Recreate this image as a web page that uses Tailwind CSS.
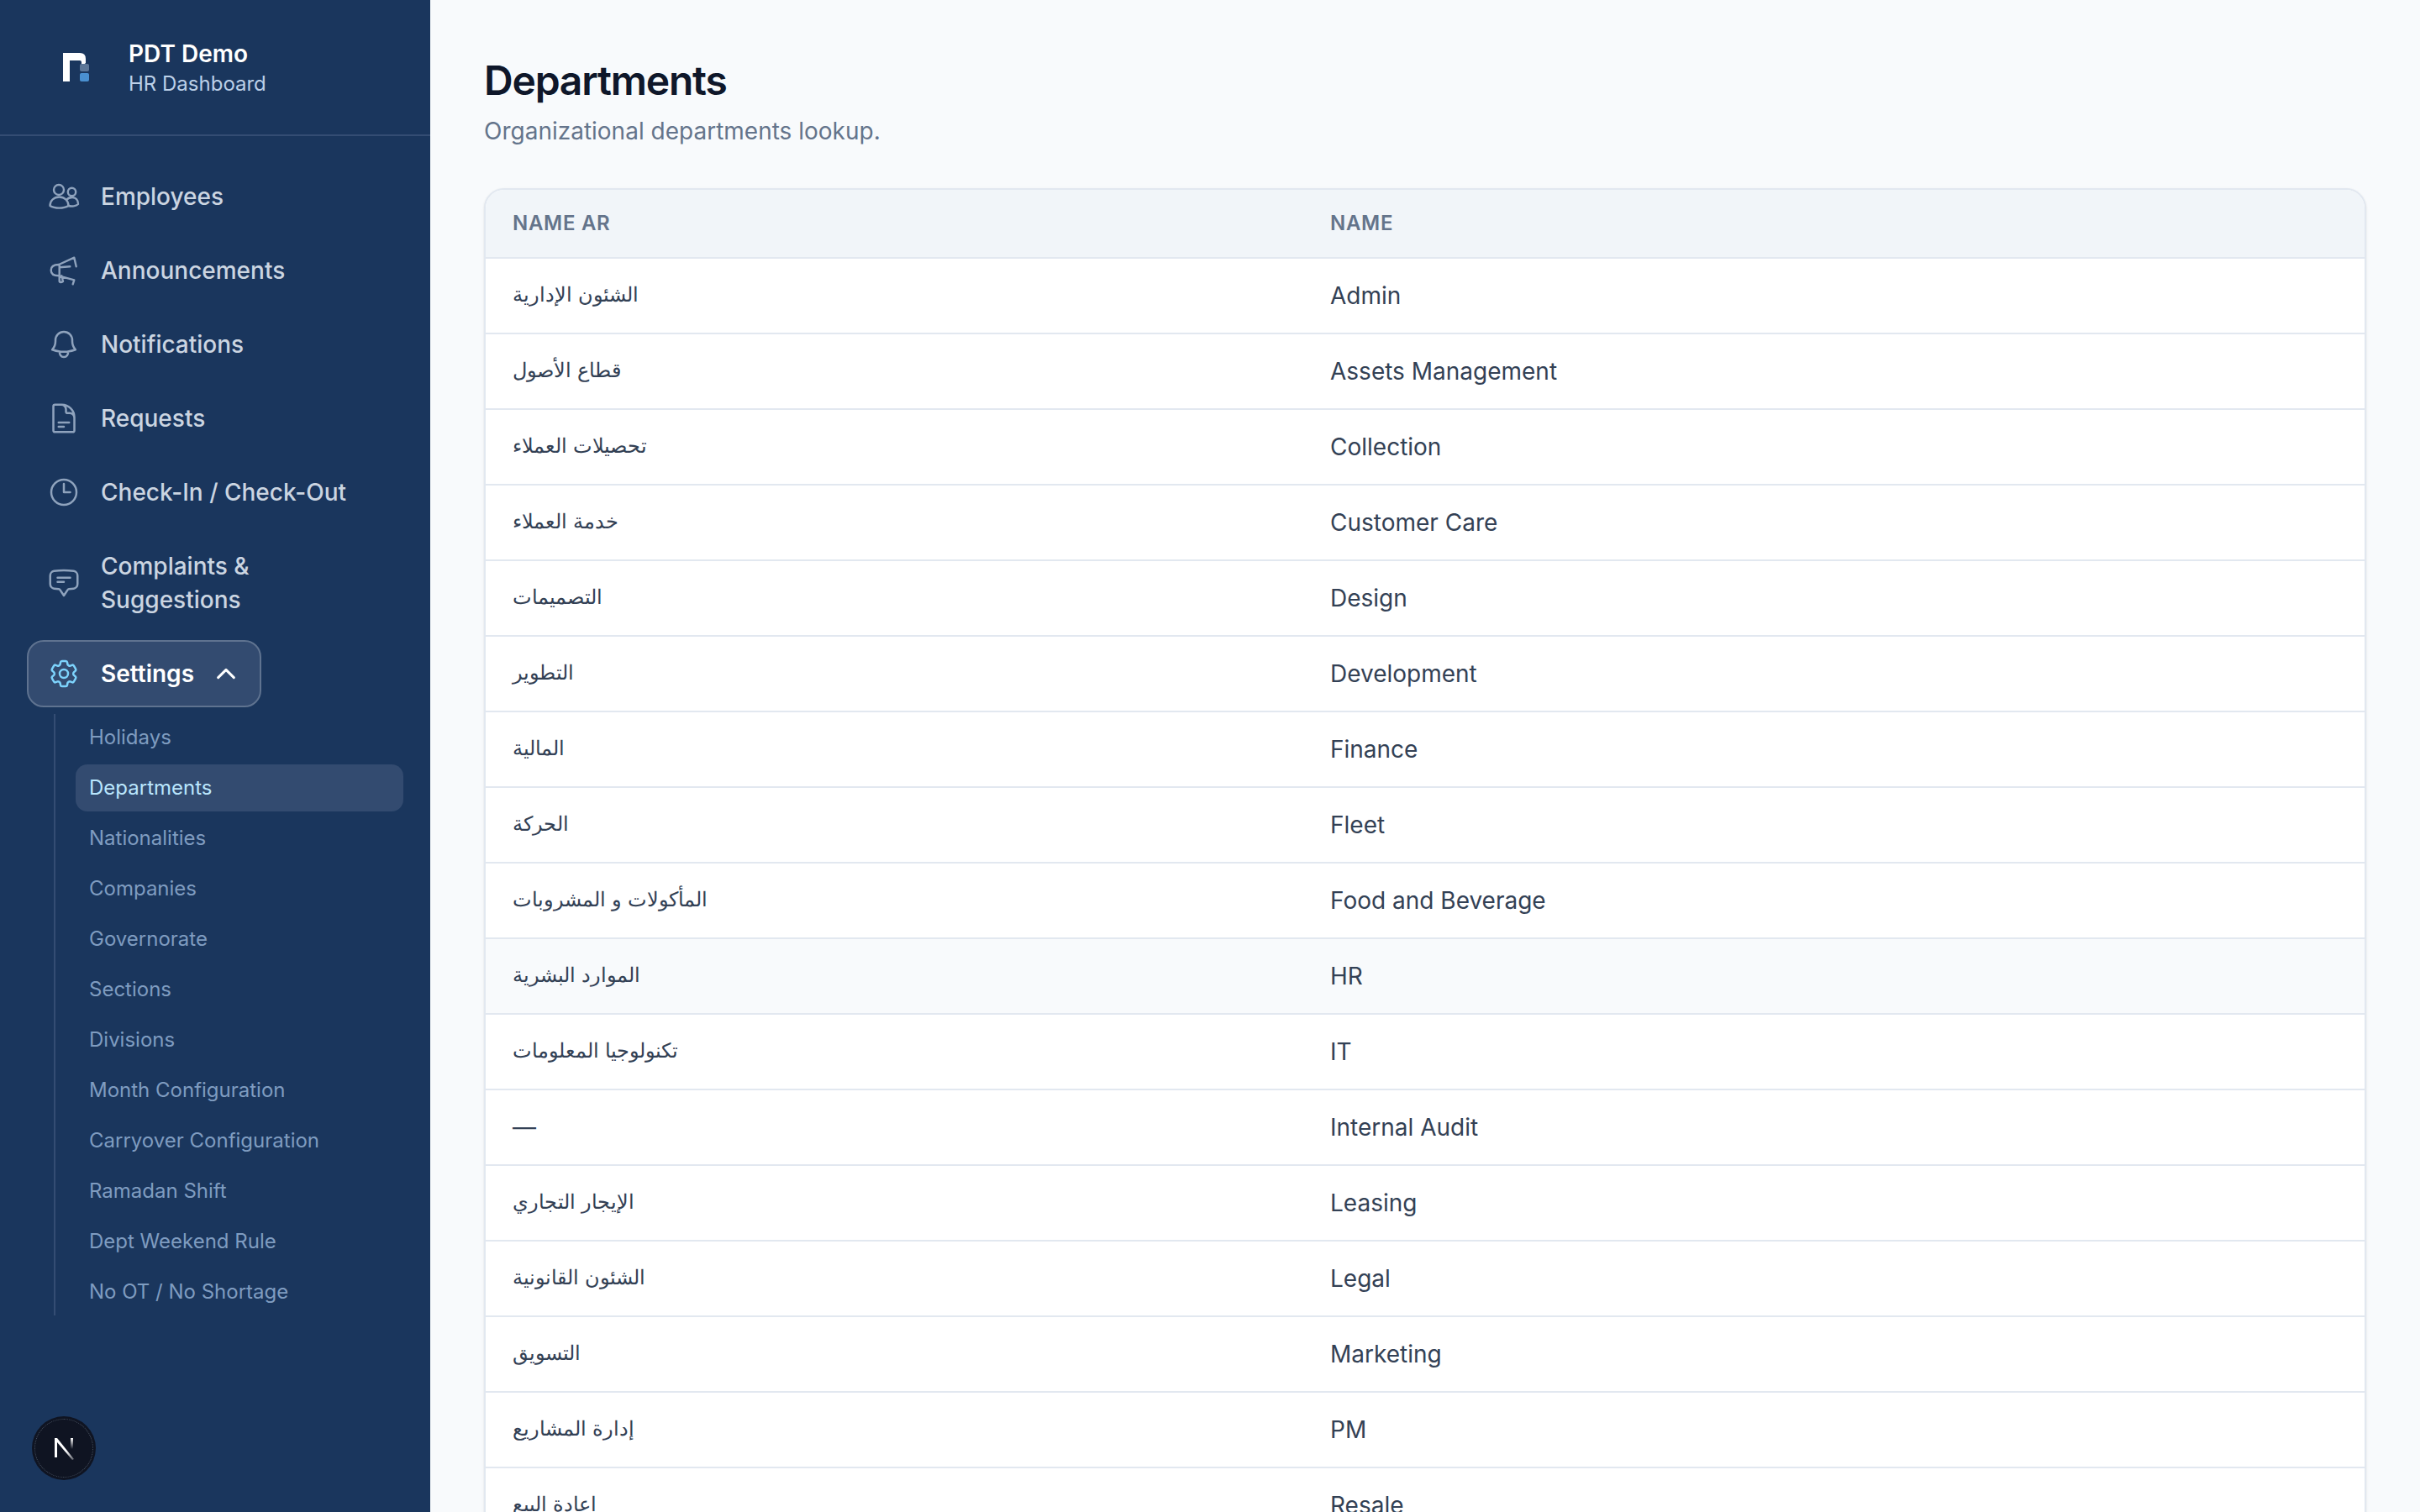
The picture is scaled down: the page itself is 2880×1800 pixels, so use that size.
<!DOCTYPE html>
<html lang="en">
<head>
    <meta charset="UTF-8">
    <title>Departments - PDT Demo</title>
    <script src="https://cdn.jsdelivr.net/npm/@tailwindcss/browser@4"></script>
</head>
<body class="h-screen overflow-hidden flex bg-[#f8fafc] font-['Inter','Liberation_Sans',sans-serif]">
    <aside class="relative w-[512px] h-full shrink-0 bg-[#1a365d] flex flex-col">
        <div class="h-[162px] shrink-0 border-b-2 border-[#344d73] flex items-center pl-[72px] gap-[45px]">
            <svg width="36" height="40" viewBox="0 0 36 40">
                <path d="M3 3H23Q30 3 30 10V15L25 19V14Q25 12 23 12H11V37H3Z" fill="#fff"/>
                <rect x="23" y="16" width="11" height="9" rx="2" fill="#5d7798"/>
                <rect x="23" y="27" width="11" height="10" rx="2" fill="#4a90d0"/>
            </svg>
            <div class="pt-[2px]">
                <p class="text-[28px] leading-[38px] font-semibold text-white">PDT Demo</p>
                <p class="text-[24px] leading-[34px] text-[#bcd0e8]">HR Dashboard</p>
            </div>
        </div>

        <nav class="px-[32px] pt-[32px] flex flex-col gap-[8px]">
            <a href="#" class="flex items-center gap-[24px] px-[24px] py-[20px] text-[28px] leading-[40px] font-medium text-[#cbd5e1]">
                <svg class="w-[40px] h-[40px] shrink-0" viewBox="-2 -2 40 40" fill="none" stroke="#8fa3bd" stroke-width="2.4" stroke-linecap="round" stroke-linejoin="round">
                    <circle cx="12" cy="10" r="6"/>
                    <circle cx="27.5" cy="12.5" r="4.7"/>
                    <path d="M1.5 29C1.5 23 6 18.5 12.5 18.5S23.5 23 23.5 29C18 32.5 7 32.5 1.5 29Z"/>
                    <path d="M21 22C23 19.5 26 19 28 19C32 19 35 22 35 27C32.5 29.5 27 30 23.5 29"/>
                </svg>
                Employees
            </a>
            <a href="#" class="flex items-center gap-[24px] px-[24px] py-[20px] text-[28px] leading-[40px] font-medium text-[#cbd5e1]">
                <svg class="w-[40px] h-[40px] shrink-0" viewBox="-2 -2 40 40" fill="none" stroke="#8fa3bd" stroke-width="2.4" stroke-linecap="round" stroke-linejoin="round">
                    <path d="M30.3 2.7L32.7 13.3M30.3 2.7L12 11C5 11 2.7 14 2.7 17.7C2.7 22 6 24.3 12 24.3L30.3 29.3L28.7 34.3M12.7 11V31Q14 33 17 31L15.3 24.3M12.7 14.3L25.3 13.3"/>
                </svg>
                Announcements
            </a>
            <a href="#" class="flex items-center gap-[24px] px-[24px] py-[20px] text-[28px] leading-[40px] font-medium text-[#cbd5e1]">
                <svg class="w-[40px] h-[40px] shrink-0" viewBox="0 0 24 24" fill="none" stroke="#8fa3bd" stroke-width="1.5" stroke-linecap="round" stroke-linejoin="round">
                    <path d="M14.857 17.082a23.848 23.848 0 0 0 5.454-1.31A8.967 8.967 0 0 1 18 9.75V9A6 6 0 0 0 6 9v.75a8.967 8.967 0 0 1-2.312 6.022c1.733.64 3.56 1.085 5.455 1.31m5.714 0a24.255 24.255 0 0 1-5.714 0m5.714 0a3 3 0 1 1-5.714 0"/>
                </svg>
                Notifications
            </a>
            <a href="#" class="flex items-center gap-[24px] px-[24px] py-[20px] text-[28px] leading-[40px] font-medium text-[#cbd5e1]">
                <svg class="w-[40px] h-[40px] shrink-0" viewBox="0 0 24 24" fill="none" stroke="#8fa3bd" stroke-width="1.5" stroke-linecap="round" stroke-linejoin="round">
                    <path d="M19.5 14.25v-2.625a3.375 3.375 0 0 0-3.375-3.375h-1.5A1.125 1.125 0 0 1 13.5 7.125v-1.5a3.375 3.375 0 0 0-3.375-3.375H8.25m0 12.75h7.5m-7.5 3H12M10.5 2.25H5.625c-.621 0-1.125.504-1.125 1.125v17.25c0 .621.504 1.125 1.125 1.125h12.75c.621 0 1.125-.504 1.125-1.125V11.25a9 9 0 0 0-9-9Z"/>
                </svg>
                Requests
            </a>
            <a href="#" class="flex items-center gap-[24px] px-[24px] py-[20px] text-[28px] leading-[40px] font-medium text-[#cbd5e1]">
                <svg class="w-[40px] h-[40px] shrink-0" viewBox="0 0 24 24" fill="none" stroke="#8fa3bd" stroke-width="1.5" stroke-linecap="round" stroke-linejoin="round">
                    <path d="M12 6v6h4.5m4.5 0a9 9 0 1 1-18 0 9 9 0 0 1 18 0Z"/>
                </svg>
                Check-In / Check-Out
            </a>
            <a href="#" class="flex items-center gap-[24px] px-[24px] py-[20px] text-[28px] leading-[40px] font-medium text-[#cbd5e1]">
                <svg class="w-[40px] h-[40px] shrink-0" viewBox="0 0 24 24" fill="none" stroke="#8fa3bd" stroke-width="1.5" stroke-linecap="round" stroke-linejoin="round">
                    <path d="M7.5 8.25h9m-9 3H12m-9.75 1.51c0 1.6 1.123 2.994 2.707 3.227 1.129.166 2.27.293 3.423.379.35.026.67.21.865.501L12 21l2.755-4.133a1.14 1.14 0 0 1 .865-.501 48.172 48.172 0 0 0 3.423-.379c1.584-.233 2.707-1.626 2.707-3.228V6.741c0-1.602-1.123-2.995-2.707-3.228A48.394 48.394 0 0 0 12 3c-2.392 0-4.744.175-7.043.513C3.373 3.746 2.25 5.14 2.25 6.741v6.018Z"/>
                </svg>
                <span class="w-[200px]">Complaints &amp; Suggestions</span>
            </a>

            <div>
                <button class="h-[80px] flex items-center gap-[24px] pl-[22px] pr-[26px] rounded-[20px] border-2 border-[#5f7390] bg-[#334b70] text-[28px] font-semibold text-white">
                    <svg class="w-[40px] h-[40px] shrink-0" viewBox="0 0 24 24" fill="none" stroke="#7dd3fc" stroke-width="1.5" stroke-linecap="round" stroke-linejoin="round">
                        <path d="M9.594 3.94c.09-.542.56-.94 1.11-.94h2.593c.55 0 1.02.398 1.11.94l.213 1.281c.063.374.313.686.645.87.074.04.147.083.22.127.325.196.72.257 1.075.124l1.217-.456a1.125 1.125 0 0 1 1.37.49l1.296 2.247a1.125 1.125 0 0 1-.26 1.431l-1.003.827c-.293.241-.438.613-.43.992a7.723 7.723 0 0 1 0 .255c-.008.378.137.75.43.991l1.004.827c.424.35.534.955.26 1.43l-1.298 2.247a1.125 1.125 0 0 1-1.369.491l-1.217-.456c-.355-.133-.75-.072-1.076.124a6.47 6.47 0 0 1-.22.128c-.331.183-.581.495-.644.869l-.213 1.281c-.09.543-.56.94-1.11.94h-2.594c-.55 0-1.019-.398-1.11-.94l-.213-1.281c-.062-.374-.312-.686-.644-.87a6.52 6.52 0 0 1-.22-.127c-.325-.196-.72-.257-1.076-.124l-1.217.456a1.125 1.125 0 0 1-1.369-.49l-1.297-2.247a1.125 1.125 0 0 1 .26-1.431l1.004-.827c.292-.24.437-.613.43-.991a6.932 6.932 0 0 1 0-.255c.007-.38-.138-.751-.43-.992l-1.004-.827a1.125 1.125 0 0 1-.26-1.43l1.297-2.247a1.125 1.125 0 0 1 1.37-.491l1.216.456c.356.133.751.072 1.076-.124.072-.044.146-.086.22-.128.332-.183.582-.495.644-.869l.214-1.28Z"/>
                        <path d="M15 12a3 3 0 1 1-6 0 3 3 0 0 1 6 0Z"/>
                    </svg>
                    Settings
                    <svg class="w-[28px] h-[28px] shrink-0" viewBox="0 0 24 24" fill="none" stroke="#fff" stroke-width="2.6" stroke-linecap="round" stroke-linejoin="round">
                        <path d="M4 16l8-8 8 8"/>
                    </svg>
                </button>

                <div class="mt-[8px] ml-[32px] border-l-2 border-[#344d73] pl-[24px] flex flex-col gap-[4px] text-[24px] text-[#7f9cc0]">
                    <a href="#" class="h-[56px] flex items-center px-[16px] rounded-[14px]">Holidays</a>
                    <a href="#" class="h-[56px] flex items-center px-[16px] rounded-[14px] bg-[#334b70] text-[#bae6fd]">Departments</a>
                    <a href="#" class="h-[56px] flex items-center px-[16px] rounded-[14px]">Nationalities</a>
                    <a href="#" class="h-[56px] flex items-center px-[16px] rounded-[14px]">Companies</a>
                    <a href="#" class="h-[56px] flex items-center px-[16px] rounded-[14px]">Governorate</a>
                    <a href="#" class="h-[56px] flex items-center px-[16px] rounded-[14px]">Sections</a>
                    <a href="#" class="h-[56px] flex items-center px-[16px] rounded-[14px]">Divisions</a>
                    <a href="#" class="h-[56px] flex items-center px-[16px] rounded-[14px]">Month Configuration</a>
                    <a href="#" class="h-[56px] flex items-center px-[16px] rounded-[14px]">Carryover Configuration</a>
                    <a href="#" class="h-[56px] flex items-center px-[16px] rounded-[14px]">Ramadan Shift</a>
                    <a href="#" class="h-[56px] flex items-center px-[16px] rounded-[14px]">Dept Weekend Rule</a>
                    <a href="#" class="h-[56px] flex items-center px-[16px] rounded-[14px]">No OT / No Shortage</a>
                </div>
            </div>
        </nav>

        <!-- dev indicator -->
        <div class="absolute left-[38px] bottom-[38px] w-[76px] h-[76px] rounded-full bg-[#0f1422] flex items-center justify-center">
            <div class="absolute inset-[3px] rounded-full border border-dotted border-[#4b5563]"></div>
            <svg width="30" height="30" viewBox="0 0 30 30" fill="none">
                <defs>
                    <linearGradient id="nDiag" x1="0" y1="0" x2="1" y2="1">
                        <stop offset="0.6" stop-color="#fff"/>
                        <stop offset="1" stop-color="#fff" stop-opacity="0.3"/>
                    </linearGradient>
                    <linearGradient id="nRight" x1="0" y1="0" x2="0" y2="1">
                        <stop offset="0" stop-color="#fff"/>
                        <stop offset="1" stop-color="#fff" stop-opacity="0"/>
                    </linearGradient>
                </defs>
                <path d="M4 3H7L27 28L25 29L7 8V26H4Z" fill="url(#nDiag)"/>
                <rect x="23" y="3" width="3" height="13" fill="url(#nRight)"/>
            </svg>
        </div>
    </aside>

    <main class="flex-1 min-w-0 px-[64px] pt-[66px]">
        <h1 class="text-[48px] leading-[60px] font-semibold tracking-[-1.2px] text-[#0f172a]">Departments</h1>
        <p class="mt-[10px] text-[28px] leading-[40px] text-[#64748b]">Organizational departments lookup.</p>

        <div class="mt-[48px] rounded-[24px] border-2 border-[#e2e8f0] bg-white shadow-sm overflow-hidden">
            <table class="w-full border-separate border-spacing-0 text-left">
                <thead class="bg-[#f1f5f9]">
                    <tr class="text-[24px] font-semibold tracking-[0.7px] text-[#64748b]">
                        <th class="w-[973px] h-[82px] pl-[32px] font-semibold border-b-2 border-[#e2e8f0]">NAME AR</th>
                        <th class="h-[82px] pl-[32px] font-semibold border-b-2 border-[#e2e8f0]">NAME</th>
                    </tr>
                </thead>
                <tbody class="text-[28px] text-[#334155]">
                    <tr><td class="h-[90px] pl-[32px] border-b-2 border-[#e2e8f0] text-[24px] pb-[2px]">الشئون الإدارية</td><td class="h-[90px] pl-[32px] border-b-2 border-[#e2e8f0]">Admin</td></tr>
                    <tr><td class="h-[90px] pl-[32px] border-b-2 border-[#e2e8f0] text-[24px] pb-[2px]">قطاع الأصول</td><td class="h-[90px] pl-[32px] border-b-2 border-[#e2e8f0]">Assets Management</td></tr>
                    <tr><td class="h-[90px] pl-[32px] border-b-2 border-[#e2e8f0] text-[24px] pb-[2px]">تحصيلات العملاء</td><td class="h-[90px] pl-[32px] border-b-2 border-[#e2e8f0]">Collection</td></tr>
                    <tr><td class="h-[90px] pl-[32px] border-b-2 border-[#e2e8f0] text-[24px] pb-[2px]">خدمة العملاء</td><td class="h-[90px] pl-[32px] border-b-2 border-[#e2e8f0]">Customer Care</td></tr>
                    <tr><td class="h-[90px] pl-[32px] border-b-2 border-[#e2e8f0] text-[24px] pb-[2px]">التصميمات</td><td class="h-[90px] pl-[32px] border-b-2 border-[#e2e8f0]">Design</td></tr>
                    <tr><td class="h-[90px] pl-[32px] border-b-2 border-[#e2e8f0] text-[24px] pb-[2px]">التطوير</td><td class="h-[90px] pl-[32px] border-b-2 border-[#e2e8f0]">Development</td></tr>
                    <tr><td class="h-[90px] pl-[32px] border-b-2 border-[#e2e8f0] text-[24px] pb-[2px]">المالية</td><td class="h-[90px] pl-[32px] border-b-2 border-[#e2e8f0]">Finance</td></tr>
                    <tr><td class="h-[90px] pl-[32px] border-b-2 border-[#e2e8f0] text-[24px] pb-[2px]">الحركة</td><td class="h-[90px] pl-[32px] border-b-2 border-[#e2e8f0]">Fleet</td></tr>
                    <tr><td class="h-[90px] pl-[32px] border-b-2 border-[#e2e8f0] text-[24px] pb-[2px]">المأكولات و المشروبات</td><td class="h-[90px] pl-[32px] border-b-2 border-[#e2e8f0]">Food and Beverage</td></tr>
                    <tr class="bg-[#f8fafc]"><td class="h-[90px] pl-[32px] border-b-2 border-[#e2e8f0] text-[24px] pb-[2px]">الموارد البشرية</td><td class="h-[90px] pl-[32px] border-b-2 border-[#e2e8f0]">HR</td></tr>
                    <tr><td class="h-[90px] pl-[32px] border-b-2 border-[#e2e8f0] text-[24px] pb-[2px]">تكنولوجيا المعلومات</td><td class="h-[90px] pl-[32px] border-b-2 border-[#e2e8f0]">IT</td></tr>
                    <tr><td class="h-[90px] pl-[32px] border-b-2 border-[#e2e8f0]">—</td><td class="h-[90px] pl-[32px] border-b-2 border-[#e2e8f0]">Internal Audit</td></tr>
                    <tr><td class="h-[90px] pl-[32px] border-b-2 border-[#e2e8f0] text-[24px] pb-[2px]">الإيجار التجاري</td><td class="h-[90px] pl-[32px] border-b-2 border-[#e2e8f0]">Leasing</td></tr>
                    <tr><td class="h-[90px] pl-[32px] border-b-2 border-[#e2e8f0] text-[24px] pb-[2px]">الشئون القانونية</td><td class="h-[90px] pl-[32px] border-b-2 border-[#e2e8f0]">Legal</td></tr>
                    <tr><td class="h-[90px] pl-[32px] border-b-2 border-[#e2e8f0] text-[24px] pb-[2px]">التسويق</td><td class="h-[90px] pl-[32px] border-b-2 border-[#e2e8f0]">Marketing</td></tr>
                    <tr><td class="h-[90px] pl-[32px] border-b-2 border-[#e2e8f0] text-[24px] pb-[2px]">إدارة المشاريع</td><td class="h-[90px] pl-[32px] border-b-2 border-[#e2e8f0]">PM</td></tr>
                    <tr><td class="h-[90px] pl-[32px] border-b-2 border-[#e2e8f0] text-[24px] pb-[2px]">اعادة البيع</td><td class="h-[90px] pl-[32px] border-b-2 border-[#e2e8f0]">Resale</td></tr>
                </tbody>
            </table>
        </div>
    </main>
</body>
</html>
